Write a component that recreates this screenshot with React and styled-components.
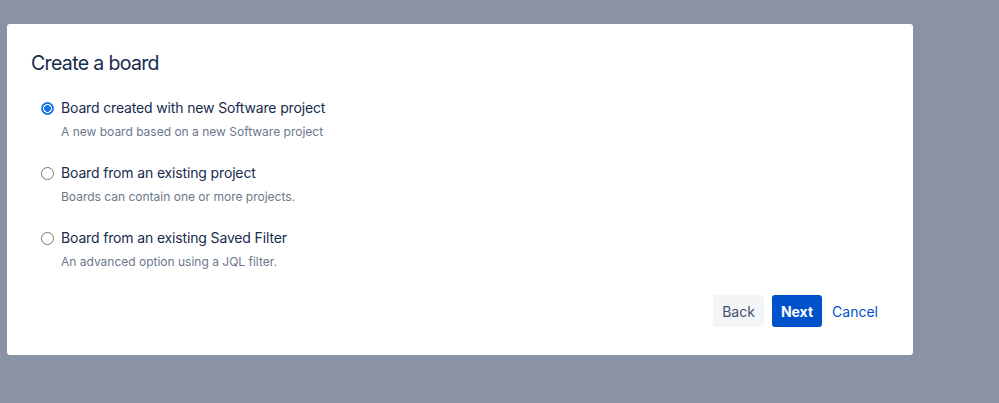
import React, { useState } from 'react'
import styled, { createGlobalStyle } from 'styled-components'

const GlobalStyle = createGlobalStyle`
  html, body {
    margin: 0;
    padding: 0;
    background: #8993a4;
    font-family: Inter, "Liberation Sans", Arial, sans-serif;
  }
`

const options = [
  { id: 'new', label: 'Board created with new Software project', desc: 'A new board based on a new Software project' },
  { id: 'existing', label: 'Board from an existing project', desc: 'Boards can contain one or more projects.' },
  { id: 'filter', label: 'Board from an existing Saved Filter', desc: 'An advanced option using a JQL filter.' },
]

const App = () => {
  const [selected, setSelected] = useState('new')

  return (
    <Page>
      <GlobalStyle />
      <Modal>
        <Title>Create a board</Title>
        <Options>
          {options.map(o => (
            <Option key={o.id} onClick={() => setSelected(o.id)}>
              <Row>
                <Radio checked={selected === o.id} />
                <Label>{o.label}</Label>
              </Row>
              <Desc>{o.desc}</Desc>
            </Option>
          ))}
        </Options>
        <Footer>
          <Button>Back</Button>
          <Button primary>Next</Button>
          <LinkButton>Cancel</LinkButton>
        </Footer>
      </Modal>
    </Page>
  )
}

export default App

const Page = styled.div`
  width: 999px;
  height: 403px;
  padding: 24px 0 0 7px;
  box-sizing: border-box;
`

const Modal = styled.div`
  width: 906px;
  height: 331px;
  box-sizing: border-box;
  background: #fff;
  border-radius: 3px;
  padding: 27px 35px 28px 24px;
  display: flex;
  flex-direction: column;
`

const Title = styled.h1`
  margin: 0;
  font-size: 19.5px;
  line-height: 24px;
  font-weight: 400;
  letter-spacing: -0.65px;
  color: #172b4d;
`

const Options = styled.div`
  margin-top: 23px;
  padding-left: 10px;
  display: flex;
  flex-direction: column;
  gap: 23px;
`

const Option = styled.div`
  display: flex;
  flex-direction: column;
  cursor: pointer;
`

const Row = styled.div`
  display: flex;
  align-items: center;
  height: 20px;
`

const Radio = styled.span`
  width: 13px;
  height: 13px;
  box-sizing: border-box;
  border-radius: 50%;
  border: 1px solid ${p => (p.checked ? '#1a73e8' : '#767676')};
  background: ${p => (p.checked ? 'radial-gradient(circle, #1a73e8 0 3.2px, #fff 3.6px 4.2px, #1a73e8 4.6px)' : '#fff')};
  margin-right: 7px;
  flex-shrink: 0;
`

const Label = styled.span`
  font-size: 14px;
  color: #172b4d;
  line-height: 20px;
  letter-spacing: -0.15px;
`

const Desc = styled.div`
  margin-top: 6px;
  padding-left: 20px;
  font-size: 12px;
  line-height: 16px;
  color: #6b778c;
`

const Footer = styled.div`
  margin-top: auto;
  display: flex;
  justify-content: flex-end;
  align-items: center;
  gap: 8px;
`

const Button = styled.button`
  height: 32px;
  padding: 0 9px;
  border: none;
  border-radius: 3px;
  font-family: inherit;
  font-size: 14px;
  font-weight: ${p => (p.primary ? 700 : 400)};
  background: ${p => (p.primary ? '#0052cc' : '#f4f5f7')};
  color: ${p => (p.primary ? '#fff' : '#42526e')};
  cursor: pointer;
`

const LinkButton = styled(Button)`
  background: transparent;
  color: #0052cc;
  padding: 0 0 0 2px;
`
